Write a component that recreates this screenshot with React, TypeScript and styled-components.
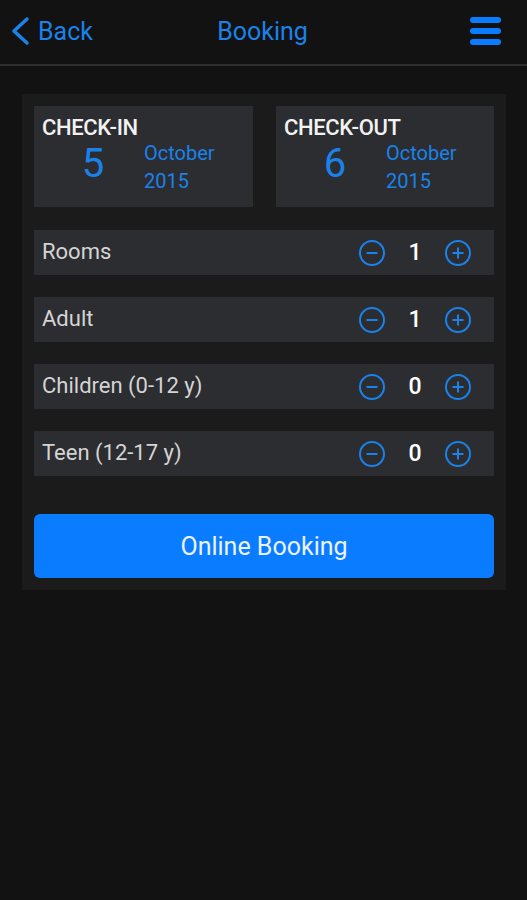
import React, { FC } from 'react';
import styled, { createGlobalStyle } from 'styled-components';

const color = {
  page: '#121212',
  panel: '#1b1b1c',
  card: '#2c2d30',
  blue: '#1a82ea',
  button: '#0a7cff',
  label: '#d4d4d4',
};

const GlobalStyle = createGlobalStyle`
  html, body {
    margin: 0;
    padding: 0;
    background: ${color.page};
    font-family: Roboto, "Noto Sans", sans-serif;
  }
`;

type Counter = { label: string; value: number };

const counters: Counter[] = [
  { label: 'Rooms', value: 1 },
  { label: 'Adult', value: 1 },
  { label: 'Children (0-12 y)', value: 0 },
  { label: 'Teen (12-17 y)', value: 0 },
];

const CircleIcon: FC<{ plus?: boolean }> = ({ plus }) => (
  <svg width="28" height="28" viewBox="0 0 28 28" fill="none">
    <circle cx="14" cy="14" r="12" stroke={color.blue} strokeWidth="2" />
    <line x1="8.5" y1="14" x2="19.5" y2="14" stroke={color.blue} strokeWidth="2" />
    {plus && <line x1="14" y1="8.5" x2="14" y2="19.5" stroke={color.blue} strokeWidth="2" />}
  </svg>
);

const DateCard: FC<{ title: string; day: number; month: string; year: number }> = ({
  title,
  day,
  month,
  year,
}) => (
  <Card>
    <CardTitle>{title}</CardTitle>
    <CardBody>
      <Day>{day}</Day>
      <MonthYear>
        <span>{month}</span>
        <span>{year}</span>
      </MonthYear>
    </CardBody>
  </Card>
);

export default function App() {
  return (
    <Page>
      <GlobalStyle />
      <Header>
        <BackLink>
          <svg width="22" height="30" viewBox="0 0 22 30" fill="none">
            <path d="M17 3 L4 15 L17 27" stroke={color.blue} strokeWidth="3.5" strokeLinecap="round" strokeLinejoin="round" />
          </svg>
          Back
        </BackLink>
        <Title>Booking</Title>
        <Menu>
          <Bar />
          <Bar />
          <Bar />
        </Menu>
      </Header>
      <Panel>
        <Dates>
          <DateCard title="CHECK-IN" day={5} month="October" year={2015} />
          <DateCard title="CHECK-OUT" day={6} month="October" year={2015} />
        </Dates>
        {counters.map(c => (
          <Row key={c.label}>
            <RowLabel>{c.label}</RowLabel>
            <Stepper>
              <CircleIcon />
              <Count>{c.value}</Count>
              <CircleIcon plus />
            </Stepper>
          </Row>
        ))}
        <BookButton>Online Booking</BookButton>
      </Panel>
    </Page>
  );
}

const Page = styled.div`
  min-height: 900px;
  background: ${color.page};
`;

const Header = styled.header`
  height: 64px;
  display: grid;
  grid-template-columns: 1fr auto 1fr;
  align-items: center;
  padding: 0 12px 0 10px;
  border-bottom: 2px solid #2e2e2e;
`;

const BackLink = styled.div`
  display: flex;
  align-items: center;
  gap: 6px;
  color: ${color.blue};
  font-size: 25px;
  justify-self: start;
  margin-top: -2px;
`;

const Title = styled.h1`
  margin: 0 0 2px 0;
  font-size: 25px;
  font-weight: 400;
  color: ${color.blue};
`;

const Menu = styled.div`
  justify-self: end;
  display: flex;
  flex-direction: column;
  gap: 5px;
  margin-right: 14px;
  margin-bottom: 2px;
`;

const Bar = styled.span`
  display: block;
  width: 31px;
  height: 6px;
  border-radius: 3px;
  background: ${color.button};
`;

const Panel = styled.main`
  margin: 28px 21px 0 22px;
  padding: 12px 12px 12px 12px;
  background: ${color.panel};
  display: flex;
  flex-direction: column;
  gap: 22px;
`;

const Dates = styled.div`
  display: grid;
  grid-template-columns: 219px 218px;
  justify-content: space-between;
  margin-bottom: 1px;
`;

const Card = styled.div`
  height: 101px;
  background: ${color.card};
  padding: 9px 7px 0 8px;
  box-sizing: border-box;
`;

const CardTitle = styled.div`
  color: #f2f2f2;
  font-size: 22px;
  font-weight: 500;
  letter-spacing: -0.4px;
`;

const CardBody = styled.div`
  display: flex;
  align-items: flex-start;
`;

const Day = styled.div`
  width: 102px;
  text-align: center;
  color: ${color.blue};
  font-size: 40px;
  line-height: 46px;
  margin-top: 1px;
`;

const MonthYear = styled.div`
  display: flex;
  flex-direction: column;
  color: ${color.blue};
  font-size: 20px;
  line-height: 28px;
  margin-top: -1px;
`;

const Row = styled.div`
  height: 45px;
  background: ${color.card};
  display: flex;
  align-items: center;
  justify-content: space-between;
  padding: 0 22px 0 8px;
`;

const RowLabel = styled.span`
  color: ${color.label};
  font-size: 22px;
  margin-top: -3px;
`;

const Stepper = styled.div`
  display: flex;
  align-items: center;
  gap: 0;
`;

const Count = styled.span`
  width: 58px;
  text-align: center;
  color: #fff;
  font-size: 23px;
  font-weight: 500;
`;

const BookButton = styled.button`
  height: 64px;
  margin-top: 16px;
  border: none;
  border-radius: 6px;
  background: ${color.button};
  color: #eaf3ff;
  font-family: Roboto, "Noto Sans", sans-serif;
  font-size: 25px;
`;
